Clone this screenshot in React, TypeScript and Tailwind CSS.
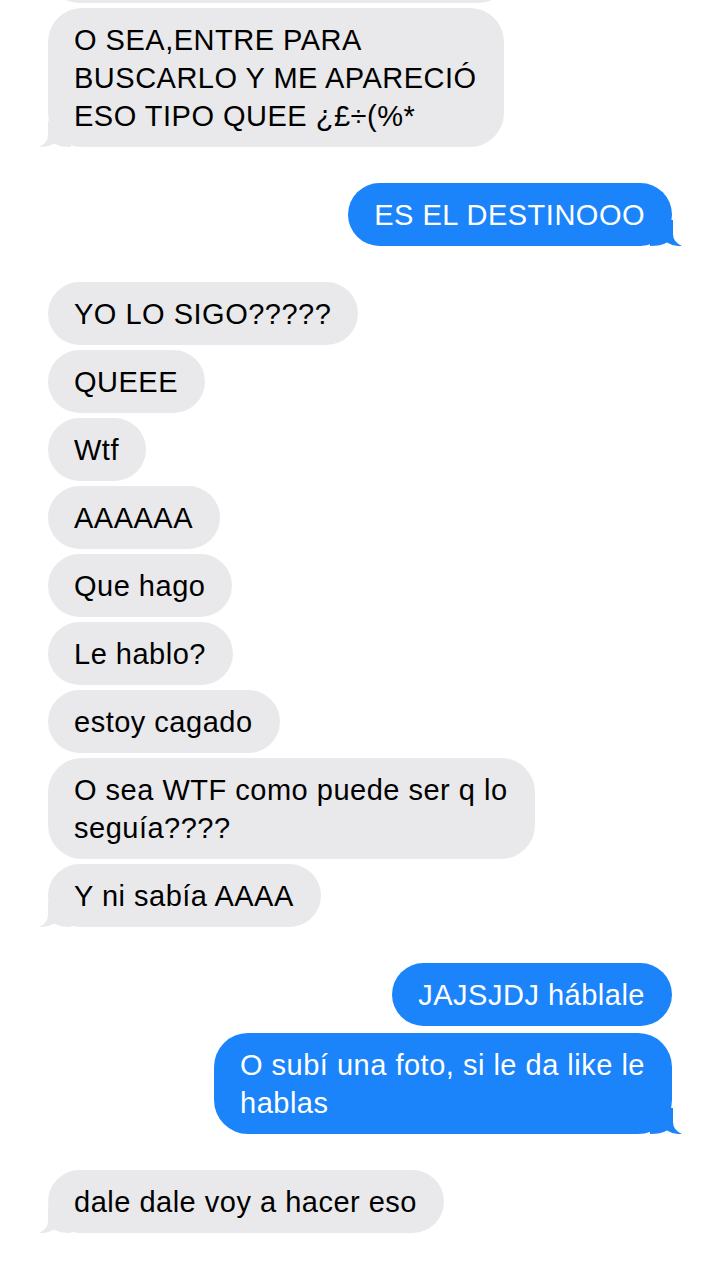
type Msg = { lines: string[] };

const received = "#e9e9eb";
const sent = "#1b84fb";

function Tail({ side, color }: { side: "left" | "right"; color: string }) {
    if (side === "left") {
        return (
            <svg
                className="pointer-events-none absolute bottom-0 left-[-9px]"
                width="32"
                height="26"
                viewBox="0 0 32 26"
            >
                <path
                    d="M9 0 L9 14 Q9 22 0 26 Q9 26.5 15 22.5 Q21 26 32 26 L32 0 Z"
                    fill={color}
                />
            </svg>
        );
    }
    return (
        <svg
            className="pointer-events-none absolute bottom-0 right-[-10px]"
            width="32"
            height="26"
            viewBox="0 0 32 26"
        >
            <path
                d="M23 0 L23 14 Q23 22 32 26 Q23 26.5 17 22.5 Q11 26 0 26 L0 0 Z"
                fill={color}
            />
        </svg>
    );
}

function Bubble({
    msg,
    mine,
    tail,
}: {
    msg: Msg;
    mine?: boolean;
    tail?: boolean;
}) {
    return (
        <div
            className={
                mine
                    ? "relative self-end rounded-[34px] bg-[#1b84fb] pl-[26px] pr-[27px] pt-[13px] pb-[12px] text-white"
                    : "relative self-start rounded-[34px] bg-[#e9e9eb] pl-[26px] pr-[27px] pt-[13px] pb-[12px] text-black"
            }
        >
            <p className="relative z-10 whitespace-nowrap text-[29px] leading-[38px] tracking-[0.5px]">
                {msg.lines.map((l, i) => (
                    <span key={i}>
                        {i > 0 && <br />}
                        {l}
                    </span>
                ))}
            </p>
            {tail && (
                <Tail side={mine ? "right" : "left"} color={mine ? sent : received} />
            )}
        </div>
    );
}

const groups: { mine: boolean; msgs: Msg[] }[] = [
    {
        mine: false,
        msgs: [
            {
                lines: [
                    "O SEA,ENTRE PARA",
                    "BUSCARLO Y ME APARECIÓ",
                    "ESO TIPO QUEE ¿£÷(%*",
                ],
            },
        ],
    },
    { mine: true, msgs: [{ lines: ["ES EL DESTINOOO"] }] },
    {
        mine: false,
        msgs: [
            { lines: ["YO LO SIGO?????"] },
            { lines: ["QUEEE"] },
            { lines: ["Wtf"] },
            { lines: ["AAAAAA"] },
            { lines: ["Que hago"] },
            { lines: ["Le hablo?"] },
            { lines: ["estoy cagado"] },
            { lines: ["O sea WTF como puede ser q lo", "seguía????"] },
            { lines: ["Y ni sabía AAAA"] },
        ],
    },
    {
        mine: true,
        msgs: [
            { lines: ["JAJSJDJ háblale"] },
            { lines: ["O subí una foto, si le da like le", "hablas"] },
        ],
    },
    { mine: false, msgs: [{ lines: ["dale dale voy a hacer eso"] }] },
];

export default function App() {
    return (
        <main
            className="flex h-[1280px] w-[720px] flex-col gap-[36px] overflow-hidden bg-white px-[48px]"
            style={{ fontFamily: "'Liberation Sans', Arial, sans-serif" }}
        >
            {groups.map((g, gi) => (
                <section
                    key={gi}
                    className={g.mine ? "flex flex-col gap-[7px]" : "flex flex-col gap-[5px]"}
                >
                    {gi === 0 && (
                        <div className="mt-[-60px] h-[63px] w-[462px] rounded-[34px] bg-[#e9e9eb]" />
                    )}
                    {g.msgs.map((m, mi) => (
                        <Bubble
                            key={mi}
                            msg={m}
                            mine={g.mine}
                            tail={mi === g.msgs.length - 1}
                        />
                    ))}
                </section>
            ))}
        </main>
    );
}
